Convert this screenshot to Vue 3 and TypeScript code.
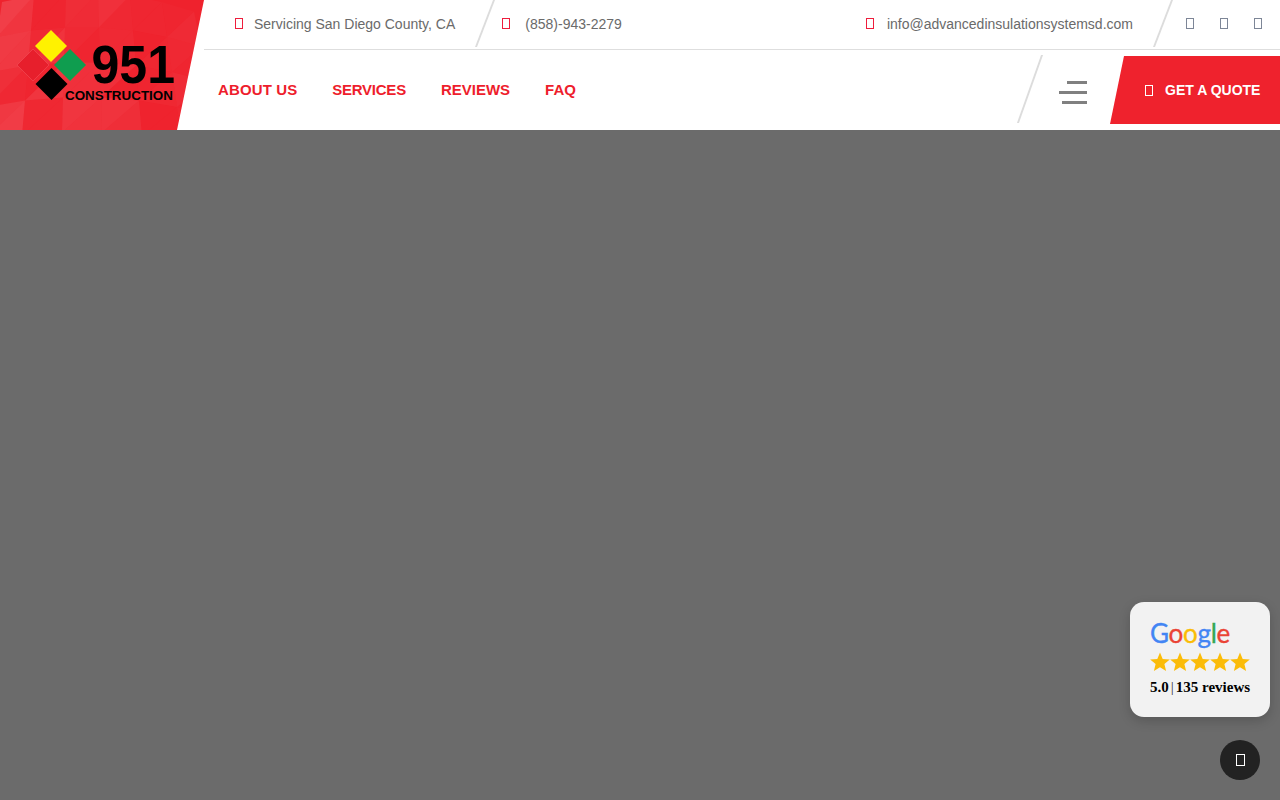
<template>
  <div class="page">
    <header class="header">
      <a class="logo" href="#">
        <svg class="logo-pattern" width="204" height="130" viewBox="0 0 204 130" aria-hidden="true">
          <polygon v-for="(t, i) in facets" :key="i" :points="t.points" fill="#fff" :opacity="t.opacity" />
        </svg>
        <svg class="logo-mark" width="72" height="72" viewBox="0 0 72 72" aria-hidden="true">
          <polygon points="34,0 50,16 34,32 18,16" fill="#fff200" />
          <polygon points="53,19 69,35 53,51 37,35" fill="#0f9d4f" />
          <polygon points="16,19 32,35 16,51 0,35" fill="#e71f2c" stroke="#f2505a" stroke-width="0.6" />
          <polygon points="34.5,38 50.5,54 34.5,70 18.5,54" fill="#000" />
        </svg>
        <div class="logo-text">
          <span class="logo-num">951</span>
          <span class="logo-word">CONSTRUCTION</span>
        </div>
      </a>

      <div class="header-main">
        <div class="topbar">
          <div class="top-item loc">
            <span class="tofu red"></span>
            <span>Servicing San Diego County, CA</span>
          </div>
          <i class="slash top"></i>
          <div class="top-item phone">
            <span class="tofu red"></span>
            <span>(858)-943-2279</span>
          </div>
          <div class="top-item mail">
            <span class="tofu red"></span>
            <span>info@advancedinsulationsystemsd.com</span>
          </div>
          <i class="slash top"></i>
          <div class="socials">
            <span v-for="n in 3" :key="n" class="tofu grey"></span>
          </div>
        </div>

        <div class="navbar">
          <nav class="nav">
            <a v-for="item in navItems" :key="item" href="#">{{ item }}</a>
          </nav>
          <i class="slash nav-slash"></i>
          <div class="burger">
            <span class="b1"></span>
            <span class="b2"></span>
            <span class="b3"></span>
          </div>
          <a class="quote" href="#">
            <span class="tofu white"></span>
            <span>GET A QUOTE</span>
          </a>
        </div>
      </div>
    </header>

    <main class="overlay"></main>

    <div class="review">
      <div class="google">
        <span class="g-blue">G</span><span class="g-red">o</span><span class="g-yellow">o</span><span class="g-blue">g</span><span class="g-green">l</span><span class="g-red">e</span>
      </div>
      <div class="stars">
        <svg v-for="n in 5" :key="n" width="20" height="20" viewBox="0 0 20 20" aria-hidden="true">
          <polygon points="10,0.5 12.7,7 19.8,7.5 14.4,12 16.1,19 10,15.2 3.9,19 5.6,12 0.2,7.5 7.3,7" fill="#fbbc09" />
        </svg>
      </div>
      <div class="score">5.0<span class="bar">|</span>135 reviews</div>
    </div>

    <button class="chat" type="button"><span class="tofu chat-icon"></span></button>
  </div>
</template>

<script setup lang="ts">
const navItems: string[] = ['ABOUT US', 'SERVICES', 'REVIEWS', 'FAQ']

// warped grid of faint triangles behind the logo
const alphas = [0.13, 0.05, 0.03, 0.11, 0.09, 0.02, 0.06, 0.12, 0.04, 0.1, 0.07, 0.02]

function vertex(i: number, j: number): string {
  const x = i * 36 - 8 + (j - 2) * (i - 2.5) * 2
  const y = j * 35 - 2 + (i - 2.5) * (i - 2.5) * 1.6 - 6
  return `${x.toFixed(1)},${y.toFixed(1)}`
}

const facets: { points: string; opacity: number }[] = []
for (let i = 0; i < 6; i++) {
  for (let j = 0; j < 5; j++) {
    const fade = 1 - i * 0.13
    const a = alphas[(i * 5 + j * 3) % alphas.length] * fade
    const b = alphas[(i * 7 + j * 5 + 4) % alphas.length] * fade
    facets.push({ points: `${vertex(i, j)} ${vertex(i + 1, j)} ${vertex(i, j + 1)}`, opacity: a })
    facets.push({ points: `${vertex(i + 1, j)} ${vertex(i + 1, j + 1)} ${vertex(i, j + 1)}`, opacity: b })
  }
}
</script>

<style scoped>
.page {
  position: relative;
  height: 800px;
  overflow: hidden;
  background: #6b6b6b;
  font-family: "Liberation Sans", Arial, sans-serif;
}

.header {
  display: flex;
  height: 130px;
  background: #fff;
}

.logo {
  position: relative;
  flex: 0 0 204px;
  height: 130px;
  background: #ef222d;
  clip-path: polygon(0 0, 100% 0, 177px 100%, 0 100%);
  text-decoration: none;
  color: #000;
}
.logo-pattern {
  position: absolute;
  left: 0;
  top: 0;
}
.logo-mark {
  position: absolute;
  left: 17px;
  top: 30px;
}
.logo-text {
  position: absolute;
  left: 65px;
  top: 44px;
  display: flex;
  flex-direction: column;
  width: 110px;
}
.logo-num {
  height: 44px;
  font-size: 50px;
  font-weight: 700;
  line-height: 42px;
  text-align: right;
  transform: scaleY(1.06);
}
.logo-word {
  height: 16px;
  font-size: 13.4px;
  font-weight: 700;
  line-height: 16px;
  white-space: nowrap;
}

.header-main {
  flex: 1;
  min-width: 0;
  display: flex;
  flex-direction: column;
}

.topbar {
  display: flex;
  align-items: center;
  height: 50px;
  box-sizing: border-box;
  padding-bottom: 2px;
  border-bottom: 1px solid #dedede;
  font-size: 14px;
  color: #6a6a6a;
}
.top-item {
  display: flex;
  align-items: center;
}
.loc {
  gap: 11px;
  margin-left: 31px;
  margin-right: 29px;
}
.phone {
  gap: 15px;
  margin-left: 16px;
}
.mail {
  gap: 13px;
  margin-left: auto;
  margin-right: 29px;
}
.socials {
  display: flex;
  gap: 26px;
  margin-left: 22px;
  margin-right: 18px;
}

.slash {
  display: block;
  flex: none;
  width: 2px;
  background: #dcdcdc;
  transform: skewX(-21deg);
}
.slash.top {
  align-self: flex-start;
  height: 47px;
}

.tofu {
  display: block;
  flex: none;
  box-sizing: border-box;
  width: 8px;
  height: 11px;
  border: 1px solid currentColor;
}
.tofu.red {
  color: #ee1d3c;
}
.tofu.grey {
  color: #7d8697;
}
.tofu.white {
  color: #fff;
}

.navbar {
  flex: 1;
  display: flex;
  align-items: flex-start;
}
.nav {
  display: flex;
  gap: 35px;
  margin-left: 14px;
  margin-top: 31px;
}
.nav a {
  font-size: 15px;
  font-weight: 700;
  color: #ee1d2c;
  text-decoration: none;
}
.nav a:nth-child(1) {
  letter-spacing: 0.12px;
}
.nav a:nth-child(2) {
  letter-spacing: -0.25px;
}
.slash.nav-slash {
  height: 68px;
  margin-left: auto;
  margin-right: 28px;
  margin-top: 5px;
  transform: skewX(-19.5deg);
}
.burger {
  display: flex;
  flex-direction: column;
  align-items: flex-end;
  gap: 7px;
  width: 28px;
  margin-right: 23px;
  margin-top: 31px;
}
.burger span {
  display: block;
  height: 3px;
  background: #808080;
}
.b1 {
  width: 20px;
}
.b2 {
  width: 28px;
}
.b3 {
  width: 25px;
}

.quote {
  display: flex;
  align-items: center;
  gap: 12px;
  box-sizing: border-box;
  width: 170px;
  height: 68px;
  margin-top: 6px;
  padding-left: 35px;
  background: #ef222d;
  clip-path: polygon(14px 0, 100% 0, 100% 100%, 0 100%);
  color: #fff;
  font-size: 14px;
  font-weight: 700;
  text-decoration: none;
}

.overlay {
  height: 670px;
}

.review {
  position: absolute;
  left: 1130px;
  top: 602px;
  box-sizing: border-box;
  width: 140px;
  height: 115px;
  padding: 16px 0 0 20px;
  background: #f2f2f2;
  border-radius: 14px;
  box-shadow: 0 4px 12px rgba(0, 0, 0, 0.18);
}
.google {
  height: 30px;
  font-family: Lato, "Liberation Sans", sans-serif;
  font-size: 26px;
  line-height: 30px;
  letter-spacing: -0.3px;
  -webkit-text-stroke: 0.35px currentColor;
}
.g-blue { color: #4285f4; }
.g-red { color: #ea4335; }
.g-yellow { color: #fbbc05; }
.g-green { color: #34a853; }

.stars {
  display: flex;
  margin-top: 4px;
  height: 20px;
}
.score {
  margin-top: 6px;
  font-family: "Liberation Serif", "Times New Roman", serif;
  font-size: 15px;
  font-weight: 700;
  line-height: 18px;
  color: #000;
  white-space: nowrap;
}
.bar {
  margin: 0 2px;
  font-weight: 400;
  color: #333;
}

.chat {
  position: absolute;
  left: 1220px;
  top: 740px;
  display: flex;
  align-items: center;
  justify-content: center;
  width: 40px;
  height: 40px;
  padding: 0;
  border: 0;
  border-radius: 50%;
  background: #222;
}
.chat-icon {
  width: 9px;
  height: 12px;
  color: #fff;
}
</style>
